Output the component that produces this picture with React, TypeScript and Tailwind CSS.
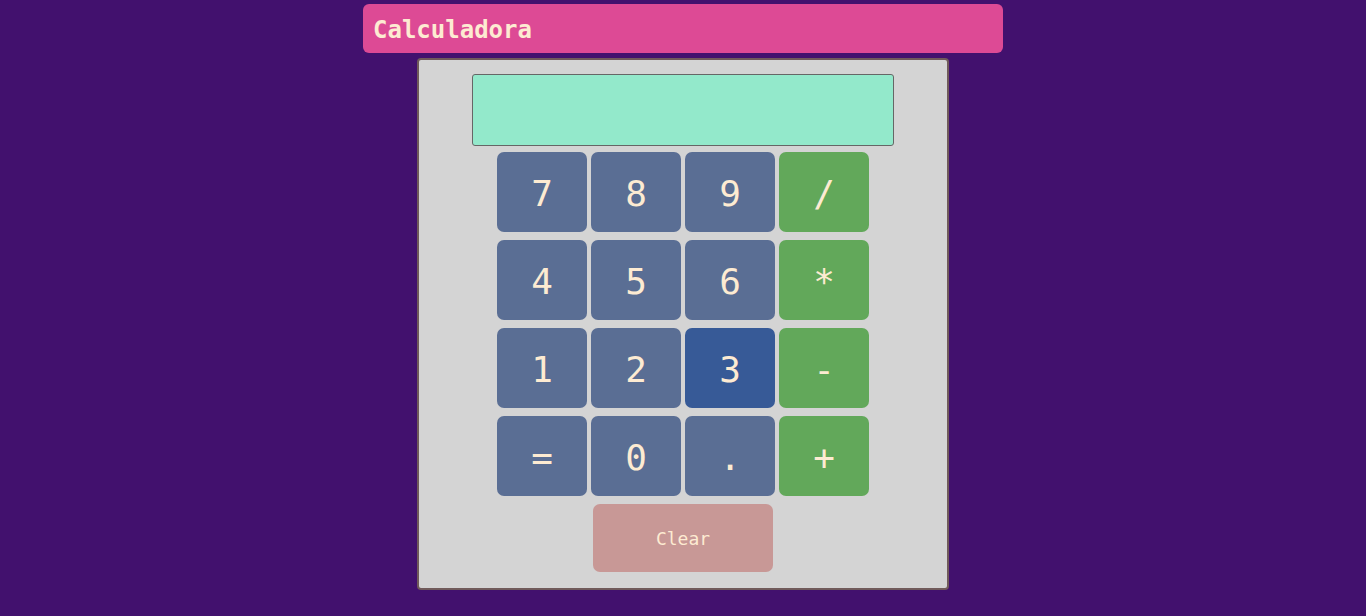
import React from "react";

const font = { fontFamily: '"DejaVu Sans Mono", "Liberation Mono", monospace' };

type Key = { label: string; kind: "num" | "op" | "active" };

const rows: Key[][] = [
  [{ label: "7", kind: "num" }, { label: "8", kind: "num" }, { label: "9", kind: "num" }, { label: "/", kind: "op" }],
  [{ label: "4", kind: "num" }, { label: "5", kind: "num" }, { label: "6", kind: "num" }, { label: "*", kind: "op" }],
  [{ label: "1", kind: "num" }, { label: "2", kind: "num" }, { label: "3", kind: "active" }, { label: "-", kind: "op" }],
  [{ label: "=", kind: "num" }, { label: "0", kind: "num" }, { label: ".", kind: "num" }, { label: "+", kind: "op" }],
];

function KeyButton({ k }: { k: Key }) {
  const bg =
    k.kind === "op" ? "bg-[#62a85a]" : k.kind === "active" ? "bg-[#375a97]" : "bg-[#5a6e94]";
  return (
    <button
      className={`${bg} w-[90px] h-[80px] rounded-[7px] text-[36px] text-[#fdebd2] flex items-center justify-center pt-[3px]`}
      style={font}
    >
      {k.label}
    </button>
  );
}

export default function App() {
  return (
    <div className="min-h-[616px] w-full bg-[#42116e] flex flex-col items-center pt-[4px]" style={font}>
      <div className="w-[640px] h-[49px] bg-[#dd4a95] rounded-[6px] flex items-center px-[10px] pt-[2px]">
        <h1 className="text-[24px] font-bold text-[#fdebd2]">Calculadora</h1>
      </div>
      <div className="mt-[5px] w-[532px] h-[532px] bg-[#d4d4d4] border-2 border-[#705a5a] rounded-[4px] flex flex-col items-center pt-[14px]">
        <div className="w-[422px] h-[72px] bg-[#93e9cb] border border-[#666666] rounded-[3px]" />
        <div className="mt-[6px] flex flex-col gap-[8px]">
          {rows.map((r, i) => (
            <div key={i} className="flex gap-[4px]">
              {r.map((k) => (
                <KeyButton key={k.label} k={k} />
              ))}
            </div>
          ))}
        </div>
        <button
          className="mt-[8px] w-[180px] h-[68px] bg-[#c89896] rounded-[7px] text-[18px] font-medium text-[#fdebd2]"
          style={font}
        >
          Clear
        </button>
      </div>
    </div>
  );
}
